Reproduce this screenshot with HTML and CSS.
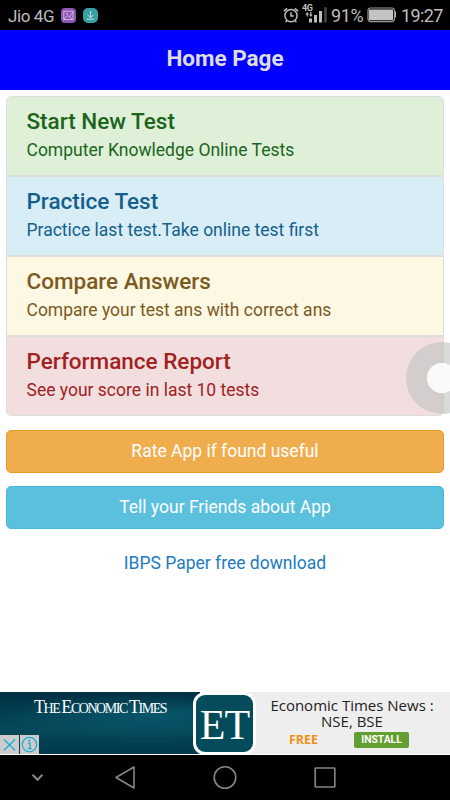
FILE: index.html
```html
<!DOCTYPE html>
<html lang="en">
<head>
<meta charset="utf-8">
<title>Home Page</title>
<link rel="stylesheet" href="styles.css">
</head>
<body>
<div class="screen">
  <div class="status">
    <span class="carrier">Jio 4G</span>
    <svg class="chip" width="15" height="15" viewBox="0 0 15 15"><rect width="15" height="15" rx="4" fill="#8e55b5"/><g fill="none" stroke="#d5c3e0" stroke-width=".9"><rect x="2.8" y="3.2" width="9.2" height="8.2"/><path d="M3 11l3.3-3.5 2 1.3L12 4M5 5.3l2 .5M8.5 8.8l2.5 2.4"/></g></svg>
    <svg class="chip second" width="15" height="15" viewBox="0 0 15 15"><rect width="15" height="15" rx="5" fill="#38a0a5"/><path d="M7.5 3v6.5M4.5 6.8l3 3 3-3M3.8 11.2h7.4" fill="none" stroke="#c5dfdf"/></svg>
    <span class="spacer"></span>
    <svg class="alarm" width="16" height="16" viewBox="0 0 16 16"><g fill="none" stroke="#bebebe" stroke-width="1.5"><circle cx="8" cy="8.6" r="6.1"/><path d="M8 5.2v3.9h2.7M.8 4.2L4.2 1.4M15.2 4.2l-3.4-2.8M4.1 13.4l-1.5 1.7M11.9 13.4l1.5 1.7"/></g></svg>
    <span class="signal"><span class="net">4G</span><svg width="25" height="20" viewBox="0 0 25 20"><g fill="#bebebe"><rect x="7" y="14.5" width="3" height="4"/><rect x="12" y="11" width="3" height="7.5"/><rect x="17" y="7" width="3" height="11.5"/><path d="M3.4 10.5l1.8-2.5 1.8 2.5H5.8v2H4.6v-2zM7 10.5h1.2V8h1.2v2.5h1.2l-1.8 2.5z"/></g><rect x="22.2" y="3.3" width="2.6" height="15.2" fill="#444"/></svg></span>
    <span class="percent">91%</span>
    <svg class="battery" width="30" height="16" viewBox="0 0 30 16"><rect x="1" y="1" width="26.4" height="13.6" rx="2.5" fill="none" stroke="#999" stroke-width="1.2"/><rect x="2" y="2.5" width="24" height="10.7" rx=".5" fill="#c3c3c3"/><path d="M28 4.5h1v6h-1z" fill="#bbb"/></svg>
    <span class="clock">19:27</span>
  </div>
  <header class="header"><h1>Home Page</h1></header>
  <main>
    <div class="list">
      <a class="item success"><h2>Start New Test</h2><p>Computer Knowledge Online Tests</p></a>
      <a class="item info"><h2>Practice Test</h2><p>Practice last test.Take online test first</p></a>
      <a class="item warning"><h2>Compare Answers</h2><p>Compare your test ans with correct ans</p></a>
      <a class="item danger"><h2>Performance Report</h2><p>See your score in last 10 tests</p></a>
    </div>
    <a class="btn rate">Rate App if found useful</a>
    <a class="btn tell">Tell your Friends about App</a>
    <a class="link">IBPS Paper free download</a>
  </main>
  <div class="ad">
    <div class="brand">
      <div class="paper"><span>T</span>HE <span>E</span>CONOMIC <span>T</span>IMES</div>
      <div class="choices">
        <svg width="19" height="19" viewBox="0 0 19 19"><rect width="19" height="19" fill="#ccc"/><path d="M4 4.5l11 10.7M15 4.5L4 15.2" stroke="#17add4" stroke-width="1.3"/></svg>
        <svg width="19" height="19" viewBox="0 0 19 19"><rect width="19" height="19" fill="#ccc"/><circle cx="9.5" cy="9.6" r="7.2" fill="none" stroke="#17add4" stroke-width="1.2"/><path d="M8 8.1h2v5.4M7.8 13.6h3.9" fill="none" stroke="#17add4" stroke-width="1.3"/><rect x="8.5" y="4.7" width="1.8" height="1.8" fill="#17add4"/></svg>
      </div>
    </div>
    <div class="offer">
      <div class="app">Economic Times News :<br>NSE, BSE</div>
      <div class="actions"><span class="free">FREE</span><span class="install">INSTALL</span></div>
    </div>
    <div class="logo">ET</div>
  </div>
  <nav class="nav">
    <svg width="450" height="45" viewBox="0 0 450 45"><g fill="none" stroke="#858585" stroke-width="1.6"><path d="M32.5 19.8l5 5 5-5" stroke-width="2"/><path d="M134 12v21L116 22.5z" stroke-linejoin="round"/><circle cx="225" cy="22.5" r="10.8"/><rect x="315.2" y="13" width="19.6" height="19" rx=".5"/></g></svg>
  </nav>
  <div class="assist"></div>
</div>
</body>
</html>
```
FILE: styles.css
```css
* { box-sizing: border-box; }
body { margin: 0; font-family: Roboto, sans-serif; }
h1, h2, p { margin: 0; }
.screen { position: relative; width: 450px; height: 800px; overflow: hidden; background: #fff; display: flex; flex-direction: column; }
.status { height: 30px; flex: none; background: #000; color: #bebebe; display: flex; align-items: center; padding: 0 8px; font-size: 18px; line-height: 30px; white-space: nowrap; }
.status svg { flex: none; display: block; }
.carrier { width: 53px; font-size: 17px; padding-top: 1px; letter-spacing: -.4px; }
.second { margin-left: 7px; }
.spacer { flex: 1; }
.signal { position: relative; top: -1px; width: 25px; height: 20px; margin: 0 4px 0 3px; }
.net { position: absolute; left: 0; top: 0; font: 700 9px/9px Roboto, sans-serif; letter-spacing: -.3px; }
.percent { width: 36px; padding-top: 1px; letter-spacing: -.4px; }
.battery { margin-right: 4px; }
.clock { width: 41px; padding-top: 1px; letter-spacing: -.6px; }
.header { height: 60px; flex: none; background: #00f; color: #dedede; text-align: center; }
.header h1 { font-size: 22.5px; line-height: 57px; font-weight: 700; }
main { flex: 1; padding: 6px; }
.list { border: 1px solid #ddd; border-radius: 5px; overflow: hidden; height: 320px; }
.item { display: block; height: 80px; padding: 8px 19.5px; border-bottom: 2px solid #ddd; }
.item:last-child { border: 0; }
.item h2 { font-size: 22.5px; line-height: 32px; font-weight: 500; white-space: nowrap; }
.item p { font-size: 17.5px; line-height: 27px; white-space: nowrap; }
.success { background: #dff0d8; color: #1c641c; }
.info { background: #d9edf7; color: #12608b; }
.warning { background: #fcf8e3; color: #7d5a22; }
.danger { background: #f2dede; color: #a02222; }
.btn { display: block; height: 43px; margin-top: 14px; border: 1px solid; border-radius: 5px; color: #fff; text-align: center; font-size: 17.5px; line-height: 40px; }
.rate { background: #f0ad4e; border-color: #ec9b22; }
.tell { background: #5bc0de; border-color: #46b8da; margin-top: 13px; }
.link { display: block; margin-top: 14px; height: 42px; text-align: center; font-size: 17.5px; line-height: 40px; color: #217bc0; }
.ad { position: relative; height: 63px; flex: none; background: #eee; display: flex; border-bottom: 1px solid #fff; }
.brand { width: 200px; display: flex; flex-direction: column; justify-content: space-between; background: radial-gradient(ellipse 150px 22px at 150px 24px, #07566b, rgba(7,86,107,0)), linear-gradient(#002f42, #06495a 60%, #003849); }
.paper { padding: 6px 0 0 34px; color: #fff; font: 14px/19px "Liberation Serif", serif; letter-spacing: -1.45px; white-space: nowrap; }
.paper span { font-size: 18px; }
.choices { display: flex; gap: 1px; height: 19px; }
.logo { position: absolute; left: 193px; top: 0; width: 63px; height: 63px; border: 3px solid #fff; border-radius: 12px; background: #044c5c; color: #fff; font: 42px/61px "Liberation Serif", serif; text-align: center; letter-spacing: -1px; }
.offer { width: 250px; padding-top: 5px; }
.app { padding-left: 54px; color: #222; font: 15px/16px "Open Sans", sans-serif; text-align: center; white-space: nowrap; }
.actions { display: flex; padding: 3px 0 0 89px; }
.free { width: 65px; color: #f28e13; font: 700 12.5px/16px "Open Sans", sans-serif; }
.install { width: 55px; height: 16px; border-radius: 2px; background: #629e30; color: #fff; text-align: center; font: 700 10.3px/16px Roboto, sans-serif; }
.nav { height: 45px; flex: none; background: #000; }
.nav svg { display: block; }
.assist { position: absolute; left: 406px; top: 342px; width: 72px; height: 72px; border-radius: 50%; background: radial-gradient(circle, #fafafa 14.7px, rgba(190,195,192,.6) 15.5px); }
```
